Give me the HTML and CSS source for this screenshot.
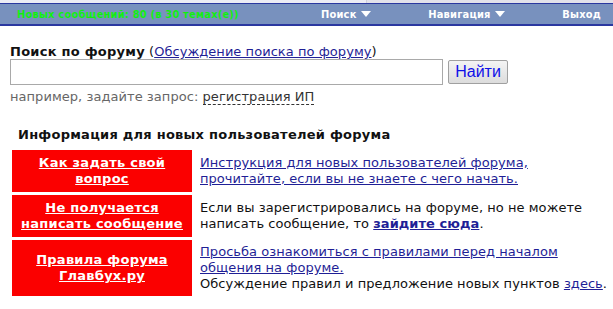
FILE: index.html
```html
<!DOCTYPE html>
<html lang="ru">
<head>
    <meta charset="UTF-8">
    <meta name="viewport" content="width=device-width, initial-scale=1.0">
    <title>Форум Главбух.ру</title>
    <link rel="stylesheet" href="styles.css">
</head>
<body>
    <div class="top-band">
        <div class="band-light"></div>
        <div class="band-gray"></div>
    </div>
    <div class="topbar">
        <span class="new-posts">Новых сообщений: 80 (в 30 темах(е))</span>
        <div class="menu">
            <a href="#" class="menu-item">Поиск <span class="arrow"></span></a>
            <a href="#" class="menu-item">Навигация <span class="arrow"></span></a>
            <a href="#" class="menu-item">Выход</a>
        </div>
    </div>

    <div class="search">
        <div class="search-title"><b>Поиск по форуму</b> (<a href="#">Обсуждение поиска по форуму</a>)</div>
        <div class="search-row">
            <input type="text" class="search-input">
            <button class="search-button">Найти</button>
        </div>
        <div class="search-hint">например, задайте запрос: <a href="#" class="hint-link">регистрация ИП</a></div>
    </div>

    <div class="info">
        <div class="info-title">Информация для новых пользователей форума</div>
        <div class="info-grid">
            <a href="#" class="red-box">Как задать свой вопрос</a>
            <div class="info-text">
                <div><a href="#">Инструкция для новых пользователей форума, прочитайте, если вы не знаете с чего начать.</a></div>
            </div>

            <a href="#" class="red-box">Не получается написать сообщение</a>
            <div class="info-text">
                <div>Если вы зарегистрировались на форуме, но не можете написать сообщение, то <a href="#" class="strong-link">зайдите сюда</a>.</div>
            </div>

            <a href="#" class="red-box">Правила форума Главбух.ру</a>
            <div class="info-text">
                <div><a href="#">Просьба ознакомиться с правилами перед началом общения на форуме.</a><br>Обсуждение правил и предложение новых пунктов <a href="#">здесь</a>.</div>
            </div>
        </div>
    </div>
</body>
</html>
```

FILE: styles.css
```css
body {
    margin: 0;
    font-family: Verdana, "DejaVu Sans", sans-serif;
    font-size: 13px;
    letter-spacing: 0.05px;
    color: #111;
    background-color: white;
}
a {
    color: #1f1f96;
}
b, .info-title, .red-box {
    letter-spacing: 0.25px;
}

/* верхняя полоса */
.top-band {
    display: flex;
    height: 3px;
    background-color: #e6e6f0;
    border-bottom: 1px solid #2a38a0;
}
.band-light {
    width: 366px;
    background-color: #ececf4;
}
.band-gray {
    flex: 1;
    background-color: #e2e2ea;
    border-left: 1px solid #cfcfdc;
}
.topbar {
    display: flex;
    align-items: center;
    height: 20px;
    background-color: #7891be;
    border-bottom: 2px solid #2a38a0;
    padding: 0 12px 0 17px;
    font-family: Tahoma, "DejaVu Sans Condensed", "DejaVu Sans", sans-serif;
    font-size: 11px;
    font-weight: bold;
    letter-spacing: 0.2px;
}
.new-posts {
    color: #12ee12;
}
.menu {
    margin-left: auto;
    display: flex;
    gap: 57px;
}
.menu-item {
    color: white;
    text-decoration: none;
}
.arrow {
    display: inline-block;
    width: 0;
    height: 0;
    border-left: 5px solid transparent;
    border-right: 5px solid transparent;
    border-top: 6px solid white;
    margin-left: 1px;
    vertical-align: 1px;
}

/* поиск */
.search {
    padding: 18px 10px 0 10px;
}
.search-title {
    line-height: 15px;
}
.search-row {
    display: flex;
    align-items: center;
    gap: 5px;
}
.search-input {
    width: 433px;
    height: 26px;
    box-sizing: border-box;
    border: 1px solid #a9a9a9;
    margin: 0;
}
.search-button {
    width: 60px;
    height: 24px;
    font-family: Arial, "Liberation Sans", sans-serif;
    font-size: 16px;
    color: #1010e8;
    background: linear-gradient(#f4f4f4, #dcdcdc);
    border: 1px solid #a0a0a0;
    border-radius: 2px;
    padding: 0;
}
.search-hint {
    color: #666;
    margin-top: 4px;
    line-height: 16px;
}
.hint-link {
    color: #333;
    text-decoration: none;
    border-bottom: 1px dashed #333;
}

/* информация */
.info {
    padding: 22px 5px 0 12px;
}
.info-title {
    font-weight: bold;
    padding-left: 6px;
    line-height: 16px;
    margin-bottom: 7px;
}
.info-grid {
    display: grid;
    grid-template-columns: 180px 1fr;
    gap: 3px 8px;
}
.red-box {
    background-color: #fb0000;
    color: white;
    font-weight: bold;
    text-align: center;
    display: flex;
    align-items: center;
    justify-content: center;
    padding: 5px 4px;
    min-height: 32px;
    line-height: 16px;
}
.info-text {
    display: flex;
    align-items: center;
    line-height: 16px;
    padding: 4px 0;
}
.strong-link {
    font-weight: bold;
}
```
